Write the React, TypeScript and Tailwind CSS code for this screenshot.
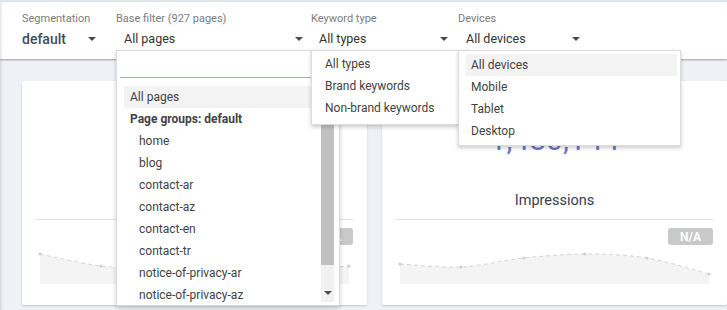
import React from 'react';

type Pt = [number, number];

// smooth path through points (catmull-rom -> bezier)
function smoothPath(pts: Pt[]) {
  let d = `M${pts[0][0]},${pts[0][1]}`;
  for (let i = 0; i < pts.length - 1; i++) {
    const p0 = pts[i - 1] || pts[i];
    const p1 = pts[i];
    const p2 = pts[i + 1];
    const p3 = pts[i + 2] || p2;
    const c1x = p1[0] + (p2[0] - p0[0]) / 6;
    const c1y = p1[1] + (p2[1] - p0[1]) / 6;
    const c2x = p2[0] - (p3[0] - p1[0]) / 6;
    const c2y = p2[1] - (p3[1] - p1[1]) / 6;
    d += ` C${c1x},${c1y} ${c2x},${c2y} ${p2[0]},${p2[1]}`;
  }
  return d;
}

function Sparkline({ points }: { points: Pt[] }) {
  const line = smoothPath(points);
  const area = `${line} L309,36 L0,36 Z`;
  return (
    <svg width="309" height="40" viewBox="0 0 309 40" overflow="visible" className="block">
      <path d={area} fill="#f4f4f4" />
      <path d={line} fill="none" stroke="#d6d6d6" strokeWidth="1" strokeDasharray="4 3" />
      {points.map((p, i) => (
        <circle key={i} cx={p[0]} cy={p[1]} r="1.6" fill="#cfcfcf" />
      ))}
    </svg>
  );
}

function Arrow() {
  return <span className="inline-block w-0 h-0 border-x-[4px] border-x-transparent border-t-[4px] border-t-[#4a4a4a]" />;
}

function MetricCard({ value, label, points }: { value: string; label: string; points: Pt[] }) {
  return (
    <div className="w-[345px] h-[224px] bg-white rounded-[2px] shadow-[0_1px_2px_rgba(0,0,0,0.18)] flex flex-col items-center pt-[41px]">
      <div className="text-[30px] leading-[36px] text-[#6f74c6]">{value}</div>
      <div className="mt-[33px] text-[14.5px] leading-[20px] text-[#34404f]">{label}</div>
      <div className="mt-[8px] w-[317px] h-px bg-[#e0e0e0]" />
      <div className="w-[317px] flex justify-end mt-[8px]">
        <span className="h-[17px] w-[45px] rounded-[3px] bg-[#c9c9c9] text-white text-[12px] font-bold flex items-center justify-center">
          N/A
        </span>
      </div>
      <div className="mt-[3px]">
        <Sparkline points={points} />
      </div>
    </div>
  );
}

export default function App() {
  const pageGroups = [
    'home',
    'blog',
    'contact-ar',
    'contact-az',
    'contact-en',
    'contact-tr',
    'notice-of-privacy-ar',
    'notice-of-privacy-az',
  ];

  return (
    <div className="w-[727px] h-[310px] overflow-hidden bg-[#eef1f5] font-['Roboto',sans-serif] text-[#424242]">
      <div className="h-[2px] bg-[#e2e7ed]" />

      {/* Filter bar */}
      <div className="relative z-10 h-[57px] bg-white shadow-[0_1px_2px_rgba(0,0,0,0.35),inset_3px_0_3px_-2px_rgba(0,0,0,0.15)] flex items-start pl-[22px] pt-[10px]">
        {/* Segmentation */}
        <div className="w-[94px]">
          <div className="text-[11px] leading-[14px] text-[#7c7c7c]">Segmentation</div>
          <div className="mt-[2px] w-[74px] h-[22px] flex items-center justify-between">
            <span className="text-[14px] font-medium text-[#3d4b5c]">default</span>
            <Arrow />
          </div>
        </div>

        {/* Base filter */}
        <div className="relative w-[195px]">
          <div className="text-[11px] leading-[14px] text-[#7c7c7c]">Base filter (927 pages)</div>
          <div className="mt-[2px] h-[22px] flex items-center justify-between pl-2 pr-2">
            <span className="text-[12.5px] text-[#333]">All pages</span>
            <Arrow />
          </div>
          <div className="absolute left-0 top-full w-[224px] h-[256px] bg-white border border-[#dcdcdc] shadow-[0_2px_4px_rgba(0,0,0,0.2)] flex flex-col">
            <div className="ml-[3px] mr-[3px] h-[27px] border-b border-[#72c0e3]" />
            <div className="flex flex-1 min-h-0 pt-2 pl-[7px] pr-[5px] pb-[3px] gap-px">
              <div className="flex-1 overflow-hidden text-[12px]">
                <div className="h-[22px] flex items-center px-[6px] bg-[#f3f3f3]">All pages</div>
                <div className="h-[22px] flex items-center px-[6px] font-bold">Page groups: default</div>
                {pageGroups.map((g) => (
                  <div key={g} className="h-[22px] flex items-center pl-[15px]">
                    {g}
                  </div>
                ))}
              </div>
              <div className="w-[13px] flex flex-col bg-[#f1f1f1]">
                <div className="h-[179px] bg-[#c1c1c1]" />
                <div className="flex-1 flex items-end justify-center pb-[7px]">
                  <span className="inline-block w-0 h-0 border-x-[4px] border-x-transparent border-t-[4px] border-t-[#505050]" />
                </div>
              </div>
            </div>
          </div>
        </div>

        {/* Keyword type */}
        <div className="relative w-[147px]">
          <div className="text-[11px] leading-[14px] text-[#7c7c7c]">Keyword type</div>
          <div className="mt-[2px] h-[22px] flex items-center justify-between pl-2 pr-[10px]">
            <span className="text-[12.5px] text-[#333]">All types</span>
            <Arrow />
          </div>
          <div className="absolute left-0 top-full w-[159px] bg-white border border-[#dcdcdc] shadow-[0_2px_4px_rgba(0,0,0,0.2)] pt-[2px] pb-[5px] pl-[7px] text-[12px]">
            {['All types', 'Brand keywords', 'Non-brand keywords'].map((t) => (
              <div key={t} className="h-[22px] flex items-center px-[6px]">
                {t}
              </div>
            ))}
          </div>
        </div>

        {/* Devices */}
        <div className="relative w-[132px]">
          <div className="text-[11px] leading-[14px] text-[#7c7c7c]">Devices</div>
          <div className="mt-[2px] h-[22px] flex items-center justify-between pl-2 pr-[10px]">
            <span className="text-[12.5px] text-[#333]">All devices</span>
            <Arrow />
          </div>
          <div className="absolute left-0 top-full w-[223px] bg-white border border-[#dcdcdc] shadow-[0_2px_4px_rgba(0,0,0,0.2)] pt-[3px] pb-[3px] pl-[7px] pr-[3px] text-[12px]">
            {['All devices', 'Mobile', 'Tablet', 'Desktop'].map((t, i) => (
              <div key={t} className={`h-[22px] flex items-center px-[5px] ${i === 0 ? 'bg-[#f3f3f3]' : ''}`}>
                {t}
              </div>
            ))}
          </div>
        </div>
      </div>

      {/* Metric cards */}
      <div className="flex gap-[15px] pl-[22px] pt-[22px] shadow-[inset_3px_0_3px_-2px_rgba(0,0,0,0.15)] h-[251px]">
        <MetricCard
          value="12,845"
          label="Clicks"
          points={[[0, 6], [61, 18], [123, 22], [185, 24], [247, 22], [309, 18]]}
        />
        <MetricCard
          value="1,480,144"
          label="Impressions"
          points={[[0, 16], [61, 19], [124, 10], [185, 6], [247, 10], [309, 26]]}
        />
      </div>
    </div>
  );
}
